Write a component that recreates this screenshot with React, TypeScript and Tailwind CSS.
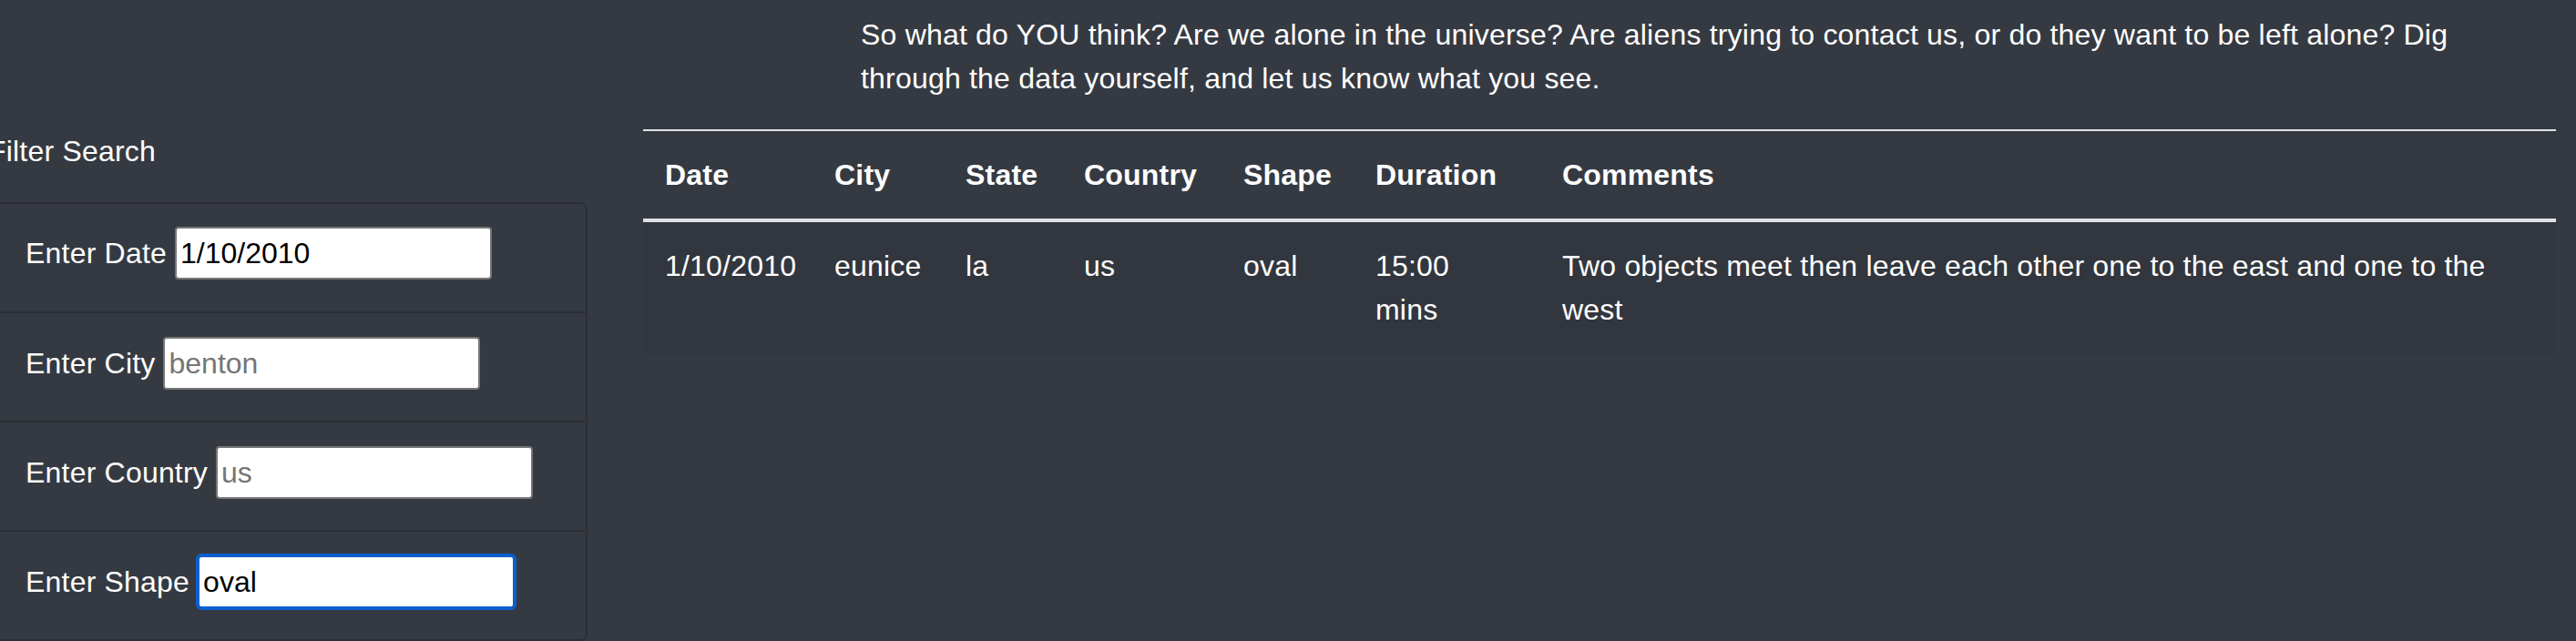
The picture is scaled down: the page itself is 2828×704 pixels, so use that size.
import React from "react";

const rows = [
  {
    date: "1/10/2010",
    city: "eunice",
    state: "la",
    country: "us",
    shape: "oval",
    duration: "15:00 mins",
    comments:
      "Two objects meet then leave each other one to the east and one to the west",
  },
];

const filters = [
  { label: "Enter Date", value: "1/10/2010", placeholder: "", focused: false },
  { label: "Enter City", value: "", placeholder: "benton", focused: false },
  { label: "Enter Country", value: "", placeholder: "us", focused: false },
  { label: "Enter Shape", value: "oval", placeholder: "", focused: true },
];

const App = () => {
  return (
    <div className="min-h-screen w-full overflow-hidden bg-[#353a42] font-['Liberation_Sans',Arial,sans-serif] text-[32px] leading-[48px] tracking-[0.2px] text-white">
      {/* intro text */}
      <p className="ml-[945px] w-[1790px] pt-[14px] pb-[32px]">
        So what do YOU think? Are we alone in the universe? Are aliens trying
        to contact us, or do they want to be left alone? Dig through the data
        yourself, and let us know what you see.
      </p>

      <div className="flex gap-[61px]">
        {/* filters */}
        <div className="-ml-[12px] w-[657px] shrink-0">
          <h5 className="ml-[-1px]">Filter Search</h5>
          <ul className="mt-[32px] rounded-[8px] border-2 border-[#2b2f35]">
            {filters.map((f, i) => (
              <li
                key={f.label}
                className={
                  "flex items-start px-[38px] " +
                  (i > 0
                    ? "h-[120px] border-t-2 border-[#2b2f35] pt-[26px]"
                    : "h-[118px] pt-[25px]")
                }
              >
                <div className="flex h-[58px] items-center gap-[9px]">
                  <label className="whitespace-nowrap">{f.label}</label>
                  <input
                    type="text"
                    defaultValue={f.value}
                    placeholder={f.placeholder}
                    className={
                      "h-[58px] w-[348px] rounded-[4px] bg-white px-[4px] text-[32px] tracking-normal text-black placeholder:text-[#757575] focus:outline-none " +
                      (f.focused
                        ? "border-2 border-[#0b5fd0] outline-2 outline-[#0b5fd0]"
                        : "border-2 border-[#767676]")
                    }
                  />
                </div>
              </li>
            ))}
          </ul>
        </div>

        {/* table */}
        <div className="w-[2100px] shrink-0">
          <table className="w-full table-fixed border-t-2 border-[#dee2e6] text-left">
            <colgroup>
              <col className="w-[186px]" />
              <col className="w-[144px]" />
              <col className="w-[130px]" />
              <col className="w-[175px]" />
              <col className="w-[145px]" />
              <col className="w-[205px]" />
              <col />
            </colgroup>
            <thead>
              <tr className="border-b-4 border-[#dee2e6]">
                {["Date", "City", "State", "Country", "Shape", "Duration", "Comments"].map(
                  (h) => (
                    <th key={h} className="p-[24px] font-bold">
                      {h}
                    </th>
                  ),
                )}
              </tr>
            </thead>
            <tbody>
              {rows.map((r) => (
                <tr key={r.date + r.city} className="bg-[#32363e] align-top">
                  <td className="p-[24px]">{r.date}</td>
                  <td className="p-[24px]">{r.city}</td>
                  <td className="p-[24px]">{r.state}</td>
                  <td className="p-[24px]">{r.country}</td>
                  <td className="p-[24px]">{r.shape}</td>
                  <td className="p-[24px] pr-[50px]">{r.duration}</td>
                  <td className="p-[24px]">{r.comments}</td>
                </tr>
              ))}
            </tbody>
          </table>
        </div>
      </div>
    </div>
  );
};

export default App;
